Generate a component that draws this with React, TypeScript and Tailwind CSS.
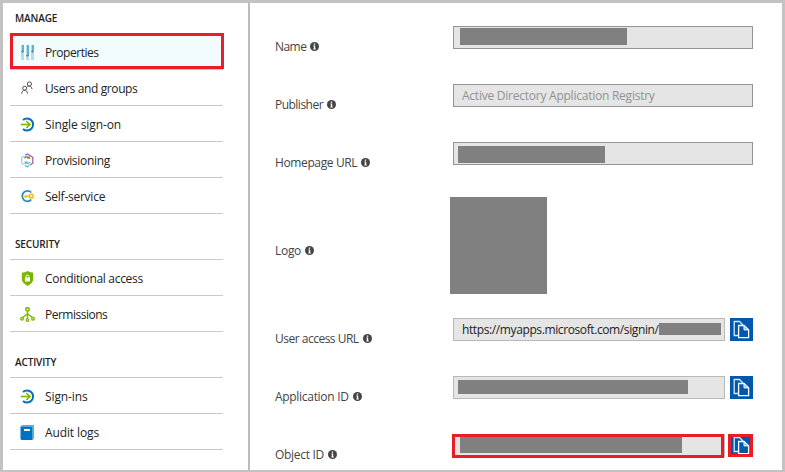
import type { ReactNode } from 'react';

const SlidersIcon = () => (
  <svg width="15" height="15" viewBox="0 0 15 15" shapeRendering="crispEdges">
    <path fill="#b4dcf1" d="M1 0h3v15h-3zM6 0h3v15h-3zM11 0h3v15h-3z" />
    <path fill="#59b4d9" d="M2 0h2v6h-2zM7 0h2v10h-2zM12 0h2v6h-2z" />
    <path fill="#7f8b91" d="M1 6h3v1h-3zM6 10h3v1h-3zM11 6h3v1h-3zM2 5h1v3h-1zM7 9h1v3h-1zM12 5h1v3h-1z" />
  </svg>
);

const UsersIcon = () => (
  <svg width="15" height="15" viewBox="0 0 15 15" fill="none" stroke="#4f4f4f" strokeWidth="1">
    <circle cx="9.400" cy="3" r="2.100" />
    <path d="M7.400 5.600C8 5.300 8.600 5.200 9.300 5.200c1.600 0 2.400 1.100 2.700 2.900" />
    <circle cx="4.700" cy="7.200" r="2" />
    <path d="M1.700 12.600c.3-2.200 1.400-3.300 3-3.300s2.600 1.100 2.900 3.300" />
  </svg>
);

const SignInIcon = () => (
  <svg width="15" height="15" viewBox="0 0 15 15" fill="none">
    <path d="M3 3.100A6 6 0 1 1 3 11.900" stroke="#0072c6" strokeWidth="2" />
    <path d="M.800 7.500h9" stroke="#7fba00" strokeWidth="1.700" />
    <path d="M6.200 4l3.700 3.500L6.200 11" stroke="#7fba00" strokeWidth="1.700" />
  </svg>
);

const ProvisioningIcon = () => (
  <svg width="15" height="15" viewBox="0 0 15 15" fill="none">
    <path d="M4.600 2.800L1.700 4.500v5.600l2.600 1.500" stroke="#9bd0ea" strokeWidth="1.200" />
    <path d="M5.200 2.300L7.500 1l5.300 3.300v5.900L10 12" stroke="#8d5ba5" strokeWidth="1.200" />
    <path d="M4.600 5.400c.5-1.800 3.300-2 4.200-.4" stroke="#804998" strokeWidth="1.200" />
    <path d="M7.300 5.300h2.100V3.200" stroke="#7fba00" strokeWidth="1.200" />
    <path d="M9.800 9c-.5 1.700-3.300 1.900-4.200.3M5.300 11.300V9h2.300" stroke="#59b4d9" strokeWidth="1.200" />
    <path d="M5.200 12.400l2.300 1.300 2-1.200" stroke="#59b4d9" strokeWidth="1.200" />
  </svg>
);

const SelfServiceIcon = () => (
  <svg width="15" height="15" viewBox="0 0 15 15" fill="none">
    <path d="M11.200 3.500A5.200 5.200 0 1 0 11.200 10.700" stroke="#2589cc" strokeWidth="1.800" />
    <path d="M4.200 7.200H9M5.500 7.200v2" stroke="#fcb714" strokeWidth="1.400" />
    <circle cx="11.300" cy="7.200" r="1.900" stroke="#fcb714" strokeWidth="1.500" fill="#fff" />
  </svg>
);

const ShieldIcon = () => (
  <svg width="15" height="15" viewBox="0 0 15 15">
    <path fill="#7fba00" d="M7.500 0c2 1.400 4 1.600 5.700 1.700v6c0 3.500-2.600 5.400-5.700 7.300C4.400 13.100 1.800 11.200 1.800 7.700v-6C3.500 1.600 5.500 1.400 7.500 0z" />
    <path fill="#5f9e00" d="M7.500 0c2 1.400 4 1.600 5.700 1.700v6c0 3.500-2.600 5.400-5.700 7.300z" opacity=".25" />
    <path fill="#fff" d="M5 6.500h5v4H5z" />
    <path d="M6 6.600V5.600a1.500 1.500 0 0 1 3 0v1" fill="none" stroke="#fff" />
  </svg>
);

const PermissionsIcon = () => (
  <svg width="15" height="15" viewBox="0 0 15 15" fill="none" stroke="#7fba00" strokeWidth="1.400">
    <circle cx="7.500" cy="2.300" r="1.700" strokeWidth="1.600" />
    <path d="M7.500 4.200v6.900M7.500 6.800L2.700 10.400M7.500 6.800l4.800 3.600" />
    <circle cx="2" cy="11.700" r="1.300" />
    <circle cx="7.500" cy="12.900" r="1.300" />
    <circle cx="13" cy="11.700" r="1.300" />
  </svg>
);

const BookIcon = () => (
  <svg width="15" height="15" viewBox="0 0 15 15">
    <path fill="#59b4d9" d="M2 0h12v13.500L12.500 15V1.500H.500z" />
    <path fill="#0072c6" d="M.500 1.500h12V15H1.500L.500 14z" />
    <path fill="#fff" d="M4 4h6v2H4z" />
  </svg>
);

const InfoIcon = () => (
  <svg className="mb-px shrink-0" width="9" height="9" viewBox="0 0 9 9">
    <circle cx="4.500" cy="4.500" r="4.500" fill="#444" />
    <path fill="#fff" d="M3.800 1.500h1.400v1.200H3.800zM3.300 3.500h1.900v3h.6v.9H3.300v-.9h.6V4.400h-.6z" />
  </svg>
);

const CopyIcon = () => (
  <svg width="23" height="23" viewBox="0 0 23 23" fill="none" stroke="#fff" strokeWidth="1.300">
    <path d="M8 17.500H4.200v-14H9.500L13 7" strokeOpacity=".85" />
    <path d="M8.600 8.500V7.500h5.400l4.600 4.400v7.700h-10z" fill="#0058ad" />
    <path d="M14 7.500v4.400h4.600z" fill="#8fb6dc" strokeWidth="1" />
  </svg>
);

type Item = { label: string; icon: ReactNode; spacing: string; active?: boolean };

const manage: Item[] = [
  { label: 'Properties', icon: <SlidersIcon />, spacing: 'tracking-[-0.45px]', active: true },
  { label: 'Users and groups', icon: <UsersIcon />, spacing: 'tracking-[-0.38px]' },
  { label: 'Single sign-on', icon: <SignInIcon />, spacing: 'tracking-[-0.1px]' },
  { label: 'Provisioning', icon: <ProvisioningIcon />, spacing: 'tracking-[-0.3px]' },
  { label: 'Self-service', icon: <SelfServiceIcon />, spacing: 'tracking-[-0.25px]' },
];
const security: Item[] = [
  { label: 'Conditional access', icon: <ShieldIcon />, spacing: 'tracking-[-0.32px]' },
  { label: 'Permissions', icon: <PermissionsIcon />, spacing: 'tracking-[-0.5px]' },
];
const activity: Item[] = [
  { label: 'Sign-ins', icon: <SignInIcon />, spacing: 'tracking-[-0.1px]' },
  { label: 'Audit logs', icon: <BookIcon />, spacing: 'tracking-[-0.12px]' },
];

function Section({ title, items }: { title: string; items: Item[] }) {
  return (
    <section className="h-[118px] first:h-[226px]">
      <h2 className="h-[27px] pl-[5px] pt-[3px] text-[10px] leading-[18px] font-semibold tracking-[-0.15px] text-[#222]">{title}</h2>
      <ul className="w-[213px] border-t border-[#c9c9c9]">
        {items.map((item) => (
          <li key={item.label} className="relative flex h-9 items-start border-b border-[#c9c9c9] pl-[10px] text-[#222]">
            {item.active && <span className="absolute -top-px left-0 h-9 w-[214px] border-3 border-[#ed1c24] bg-[#f2fcfe]" />}
            <span className="relative flex w-[25px] pt-[11px]">{item.icon}</span>
            <span className={`relative pt-[10px] whitespace-nowrap ${item.spacing}`}>{item.label}</span>
          </li>
        ))}
      </ul>
    </section>
  );
}

type FieldProps = {
  label: string;
  spacing?: string;
  height?: string;
  children: ReactNode;
};

function Field({ label, spacing = 'tracking-[-0.3px]', height = 'h-[58px]', children }: FieldProps) {
  return (
    <div className={`flex items-start ${height}`}>
      <div className="flex w-[178px] shrink-0 items-center gap-1 pt-[12px] leading-[18px] text-[#444]">
        <span className={`whitespace-nowrap ${spacing}`}>{label}</span>
        <InfoIcon />
      </div>
      {children}
    </div>
  );
}

const CopyButton = () => (
  <button className="ml-[5px] size-[23px] shrink-0 bg-[#0058ad]">
    <CopyIcon />
  </button>
);

export default function App() {
  return (
    <div className="flex h-[472px] w-[785px] overflow-hidden border-3 border-b-2 border-[#c3c3c3] bg-white font-['Open_Sans','Noto_Sans',sans-serif] text-[12px] leading-[18px]">
      <nav className="w-[247px] shrink-0 border-r-2 border-[#bcbcbc] pl-[7px] pt-[3px]">
        <Section title="MANAGE" items={manage} />
        <Section title="SECURITY" items={security} />
        <Section title="ACTIVITY" items={activity} />
      </nav>
      <main className="flex-1 pl-[25px] pt-[23px]">
        <Field label="Name" spacing="tracking-[-0.55px]">
          <div className="h-[23px] w-[300px] border border-[#949494] bg-[#e5e5e5] pl-[6px] pt-px">
            <div className="h-[17px] w-[167px] bg-[#808080]" />
          </div>
        </Field>
        <Field label="Publisher" spacing="tracking-[-0.52px]">
          <div className="h-[23px] w-[300px] border border-[#949494] bg-[#e5e5e5] pl-2 pt-[2px] text-[#929292]">
            <span className="block tracking-[-0.24px] whitespace-nowrap">Active Directory Application Registry</span>
          </div>
        </Field>
        <Field label="Homepage URL" spacing="tracking-[-0.38px]">
          <div className="h-[23px] w-[300px] border border-[#949494] bg-[#e5e5e5] pl-1 pt-[3px]">
            <div className="h-[17px] w-[147px] bg-[#808080]" />
          </div>
        </Field>
        <div className="flex h-[118px] items-start">
          <div className="flex w-[175px] items-center gap-1 pt-[42px] text-[#444]">
            <span className="tracking-[-0.3px]">Logo</span>
            <InfoIcon />
          </div>
          <div className="-mt-[3px] size-[97px] bg-[#808080]" />
        </div>
        <Field label="User access URL" spacing="tracking-[-0.5px]">
          <div className="flex h-[23px] w-[272px] items-start border border-[#b9b9b9] bg-[#e5e5e5] pl-2 text-[#222]">
            <span className="w-[197px] shrink-0 pt-[2px] tracking-[-0.39px] whitespace-nowrap">https://myapps.microsoft.com/signin/</span>
            <div className="relative mt-1 h-3 w-[62px] shrink-0 bg-[#808080]" />
          </div>
          <CopyButton />
        </Field>
        <Field label="Application ID">
          <div className="h-[23px] w-[272px] border border-[#b9b9b9] bg-[#e5e5e5] pl-1 pt-[3px]">
            <div className="h-[14px] w-[230px] bg-[#808080]" />
          </div>
          <CopyButton />
        </Field>
        <Field label="Object ID" height="h-[34px]">
          <div className="relative h-[23px] w-[272px] border border-[#b9b9b9] bg-[#e5e5e5] pl-[6px] pt-[2px]">
            <div className="h-[16px] w-[222px] bg-[#808080]" />
            <span className="absolute -top-px -left-[2px] h-6 w-[272px] border-3 border-[#ed1c24]" />
          </div>
          <div className="relative">
            <CopyButton />
            <span className="absolute top-0 left-[3px] h-[23px] w-[25px] border-3 border-[#ed1c24]" />
          </div>
        </Field>
      </main>
    </div>
  );
}
